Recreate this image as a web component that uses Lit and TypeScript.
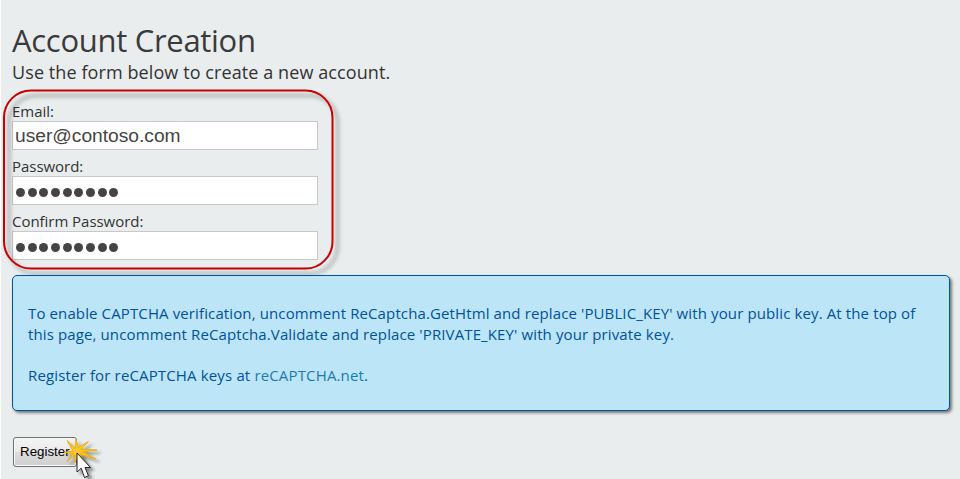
import { LitElement, html, css } from "lit";
import { customElement } from "lit/decorators.js";

const DOTS = Array.from({ length: 9 });

@customElement("app-root")
class AppRoot extends LitElement {
  static styles = css`
    :host { display: block; box-sizing: border-box; position: relative; width: 960px; height: 479px; overflow: hidden; background: #e9edee; border-left: 1px solid #fff; padding: 21px 9px 0 11px; font-family: "Open Sans", "Noto Sans", sans-serif; color: #333; }
    h1 { margin: 0; font-size: 31px; line-height: 38px; font-weight: 400; letter-spacing: -0.3px; color: #3a3a3a; white-space: nowrap; }
    h2 { margin: 2px 0 0; font-size: 18px; line-height: 22px; font-weight: 400; letter-spacing: 0.09px; white-space: nowrap; }
    .fields { display: flex; flex-direction: column; margin-top: 18px; }
    .field { display: flex; flex-direction: column; height: 55px; }
    .label { font-size: 15px; line-height: 20px; letter-spacing: -0.04px; white-space: nowrap; }
    .box { box-sizing: border-box; width: 306px; height: 29px; background: #fff; border: 1px solid #c8c8c8; display: flex; align-items: center; padding-left: 2px; font: 19.2px "Liberation Sans", Arial, sans-serif; color: #444; }
    .dots { display: flex; gap: 2.67px; padding: 3px 0 0 1px; }
    .dot { width: 9px; height: 9px; border-radius: 50%; background: #444; }
    .panel { position: relative; z-index: 2; box-sizing: border-box; width: 938px; height: 136px; margin-top: 9px; border: 1px solid #00529b; border-radius: 5px; background: #bde5f8; box-shadow: 2px 2px 3px #777; padding: 27px 15px; font-size: 15px; line-height: 21px; letter-spacing: 0.12px; color: #00529b; white-space: nowrap; }
    .gap { height: 20px; }
    .keys { letter-spacing: 0.15px; }
    .panel a { color: #1a7bb0; }
    .btn { margin: 26px 0 0 1px; box-sizing: border-box; width: 64px; height: 30px; border: 1px solid #707070; border-radius: 3px; box-shadow: inset 0 0 0 1px #fafafa; background: linear-gradient(#f3f3f3, #ebebeb 50%, #ddd 50%, #cfcfcf); font: 13.33px "Liberation Sans", Arial, sans-serif; color: #000; padding: 0 0 2px 6px; text-align: left; display: block; }
    .ring, .cursor { position: absolute; pointer-events: none; overflow: visible; }
    .ring { left: -1px; top: 0; z-index: 1; }
    .cursor { left: 59px; top: 430px; }
  `;
  render() {
    const dots = html`<div class="dots">${DOTS.map(() => html`<span class="dot"></span>`)}</div>`;
    return html`
      <h1>Account Creation</h1>
      <h2>Use the form below to create a new account.</h2>
      <div class="fields">
        <div class="field"><div class="label">Email:</div><div class="box">user@contoso.com</div></div>
        <div class="field"><div class="label">Password:</div><div class="box">${dots}</div></div>
        <div class="field"><div class="label">Confirm Password:</div><div class="box">${dots}</div></div>
      </div>
      <div class="panel">
        <div>To enable CAPTCHA verification, uncomment ReCaptcha.GetHtml and replace 'PUBLIC_KEY' with your public key. At the top of</div>
        <div>this page, uncomment ReCaptcha.Validate and replace 'PRIVATE_KEY' with your private key.</div>
        <div class="gap"></div>
        <div class="keys">Register for reCAPTCHA keys at <a>reCAPTCHA.net</a>.</div>
      </div>
      <button class="btn">Register</button>
      <svg class="ring" width="360" height="290">
        <defs><filter id="s" x="-10%" y="-10%" width="125%" height="125%"><feDropShadow dx="5" dy="5" stdDeviation="2" flood-color="#000" flood-opacity=".4"/></filter></defs>
        <rect x="4" y="90.5" width="328.5" height="178" rx="27" fill="none" stroke="#c60000" stroke-width="2" filter="url(#s)"/>
      </svg>
      <svg class="cursor" width="45" height="49" viewBox="60 430 45 49">
        <defs><filter id="c" x="-20%" y="-20%" width="170%" height="160%"><feDropShadow dx="3.5" dy="3" stdDeviation="1.5" flood-color="#000" flood-opacity=".4"/></filter></defs>
        <path d="M67 440.500L75.200 448.500 76 439.500 78.300 447.500 88.500 441.500 81 449.300 97 450 82.500 452 96 459 80.500 454.500 84 463 77.500 455.500 75 463 75 454.500 67 461.500 73 453.500 64 452.500 73 450.800Z" fill="#ffc72b" stroke="#e8a900" stroke-width=".9" filter="url(#c)"/>
        <path d="M77 453V472L81.200 468.200 84.500 477.500 88.500 475.800 85 467.500H90.500Z" fill="#fff" stroke="#222" stroke-width="1" stroke-linejoin="round" filter="url(#c)"/>
      </svg>
    `;
  }
}
